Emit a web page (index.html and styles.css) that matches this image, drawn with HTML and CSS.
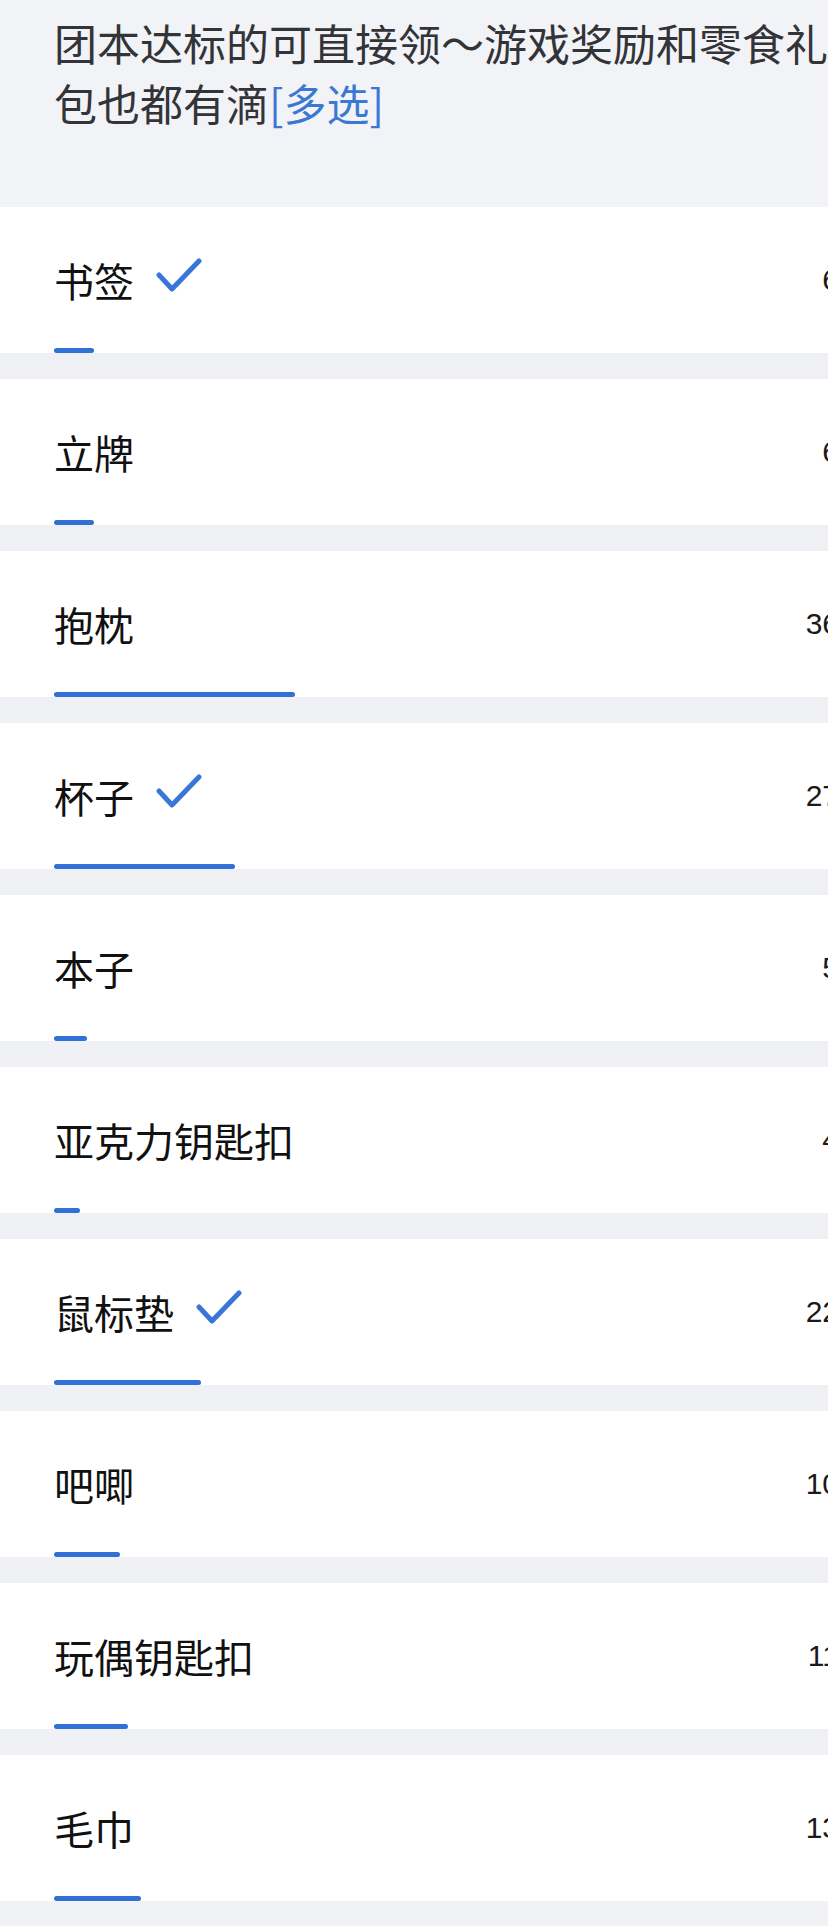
FILE: index.html
```html
<!DOCTYPE html>
<html lang="zh-CN">
<head>
<meta charset="utf-8">
<title>投票</title>
<link rel="stylesheet" href="styles.css">
</head>
<body>
<div class="page">
  <header class="question">团本达标的可直接领～游戏奖励和零食礼包也都有滴<span class="tag">[多选]</span></header>
  <ul class="options">
    <li class="card">
      <div class="row"><span class="label">书签</span><svg class="check" viewBox="0 0 46 36"><polyline points="3,18 16,32 43,4"/></svg><span class="count">6</span></div>
      <div class="bar" style="width:40px"></div>
    </li>
    <li class="card">
      <div class="row"><span class="label">立牌</span><span class="count">6</span></div>
      <div class="bar" style="width:40px"></div>
    </li>
    <li class="card">
      <div class="row"><span class="label">抱枕</span><span class="count">36</span></div>
      <div class="bar" style="width:241px"></div>
    </li>
    <li class="card">
      <div class="row"><span class="label">杯子</span><svg class="check" viewBox="0 0 46 36"><polyline points="3,18 16,32 43,4"/></svg><span class="count">27</span></div>
      <div class="bar" style="width:181px"></div>
    </li>
    <li class="card">
      <div class="row"><span class="label">本子</span><span class="count">5</span></div>
      <div class="bar" style="width:33px"></div>
    </li>
    <li class="card">
      <div class="row"><span class="label">亚克力钥匙扣</span><span class="count">4</span></div>
      <div class="bar" style="width:26px"></div>
    </li>
    <li class="card">
      <div class="row"><span class="label">鼠标垫</span><svg class="check" viewBox="0 0 46 36"><polyline points="3,18 16,32 43,4"/></svg><span class="count">22</span></div>
      <div class="bar" style="width:147px"></div>
    </li>
    <li class="card">
      <div class="row"><span class="label">吧唧</span><span class="count">10</span></div>
      <div class="bar" style="width:66px"></div>
    </li>
    <li class="card">
      <div class="row"><span class="label">玩偶钥匙扣</span><span class="count">11</span></div>
      <div class="bar" style="width:74px"></div>
    </li>
    <li class="card">
      <div class="row"><span class="label">毛巾</span><span class="count">13</span></div>
      <div class="bar" style="width:87px"></div>
    </li>
  </ul>
</div>
</body>
</html>
```

FILE: styles.css
```css
html, body {
  margin: 0;
  padding: 0;
  background: #f1f2f5;
  overflow: hidden;
}

.page {
  width: 828px;
  font-family: "Noto Sans CJK SC", "Noto Sans", sans-serif;
}

.question {
  box-sizing: border-box;
  width: 850px;
  height: 207px;
  padding: 12px 0 0 54px;
  font-size: 43px;
  line-height: 60px;
  color: #333438;
  background: #f2f3f6;
}

.tag {
  color: #3b78d4;
}

.options {
  list-style: none;
  margin: 0;
  padding: 0;
  display: flex;
  flex-direction: column;
  gap: 26px;
  background: linear-gradient(#e8e9ec, #eff0f3 8px, #f0f1f4);
}

.card {
  box-sizing: border-box;
  height: 146px;
  padding-top: 5px;
  background: #fff;
  display: flex;
  flex-direction: column;
  overflow: hidden;
}

.row {
  flex: 1;
  display: flex;
  align-items: center;
  padding-left: 54px;
}

.label {
  font-size: 40px;
  line-height: 48px;
  color: #111;
}

.check {
  width: 46px;
  height: 36px;
  margin-left: 22px;
  margin-bottom: 10px;
  fill: none;
  stroke: #3a76d8;
  stroke-width: 5;
  stroke-linecap: round;
  stroke-linejoin: round;
}

.count {
  margin-left: auto;
  margin-right: -11px;
  font-family: "Liberation Sans", Arial, sans-serif;
  font-size: 30px;
  color: #1a1a1a;
}

.bar {
  height: 5px;
  margin-left: 54px;
  border-radius: 3px;
  background: #3170d6;
  flex: none;
}
```
